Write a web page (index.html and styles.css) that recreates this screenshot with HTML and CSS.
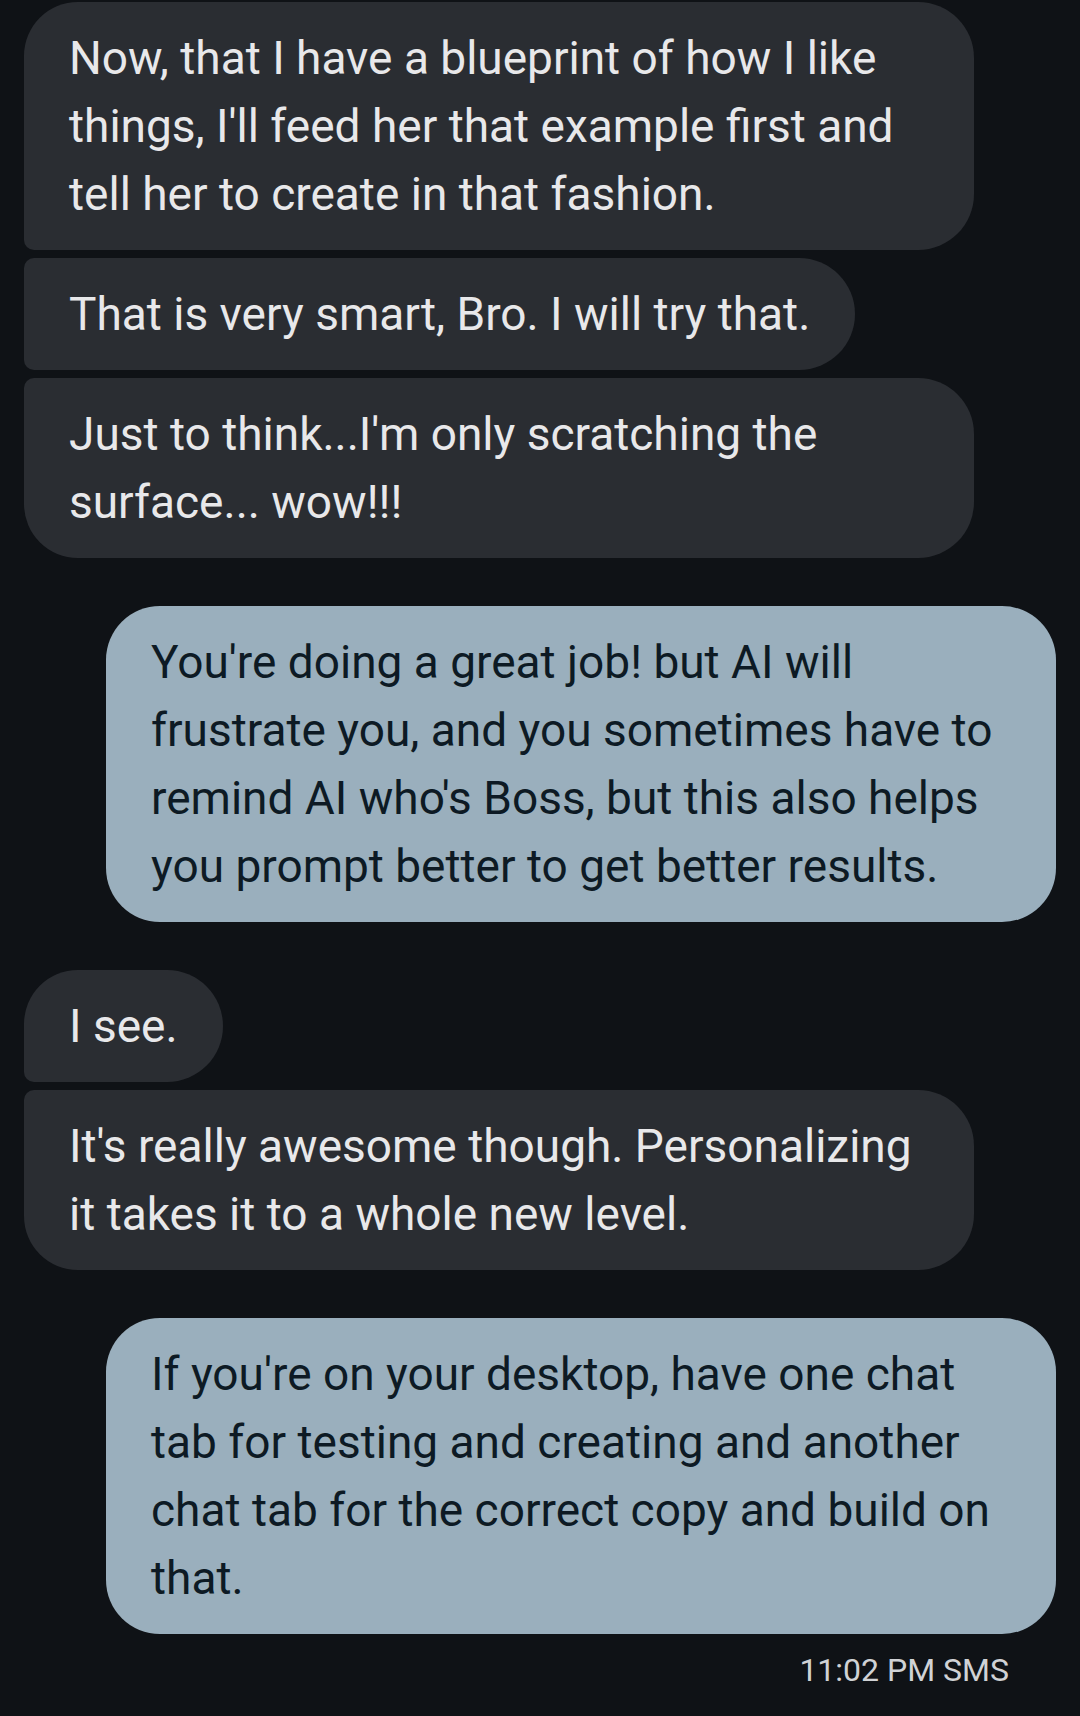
FILE: index.html
```html
<!DOCTYPE html>
<html lang="en">
<head>
  <meta charset="UTF-8">
  <meta name="viewport" content="width=device-width, initial-scale=1.0">
  <title>Messages</title>
  <link rel="stylesheet" href="styles.css">
</head>
<body>
  <div class="thread">
    <div class="group in">
      <div class="bubble">Now, that I have a blueprint of how I like things, I'll feed her that example first and tell her to create in that fashion.</div>
      <div class="bubble">That is very smart, Bro. I will try that.</div>
      <div class="bubble">Just to think...I'm only scratching the surface... wow!!!</div>
    </div>

    <div class="group out">
      <div class="bubble">You're doing a great job! but AI will frustrate you, and you sometimes have to remind AI who's Boss, but this also helps you prompt better to get better results.</div>
    </div>

    <div class="group in">
      <div class="bubble">I see.</div>
      <div class="bubble">It's really awesome though. Personalizing it takes it to a whole new level.</div>
    </div>

    <div class="group out">
      <div class="bubble">If you're on your desktop, have one chat tab for testing and creating and another chat tab for the correct copy and build on that.</div>
      <div class="meta">11:02 PM SMS</div>
    </div>
  </div>
</body>
</html>
```
FILE: styles.css
```css
body {
  margin: 0;
  background-color: #0f1216;
  font-family: Roboto, "Noto Sans", sans-serif;
  min-height: 1716px;
}

.thread {
  display: flex;
  flex-direction: column;
  padding: 2px 24px 0;
}

.group {
  display: flex;
  flex-direction: column;
  gap: 8px;
  margin-bottom: 48px;
}

.group.in {
  align-items: flex-start;
}

.group.out {
  align-items: flex-end;
}

.bubble {
  box-sizing: border-box;
  max-width: 950px;
  padding: 22px 45px;
  font-size: 46px;
  line-height: 68px;
  border-radius: 54px;
}

.in .bubble {
  background-color: #2a2d32;
  color: #e8e8ea;
  border-radius: 10px 56px 56px 10px;
}

.in .bubble:first-child {
  border-top-left-radius: 54px;
}

.in .bubble:last-child {
  border-bottom-left-radius: 54px;
}

.out .bubble {
  background-color: #9aafbd;
  color: #0d1a24;
}

.meta {
  margin-top: 9px;
  padding-right: 47px;
  font-size: 32px;
  line-height: 38px;
  color: #d0d2d5;
}
```
